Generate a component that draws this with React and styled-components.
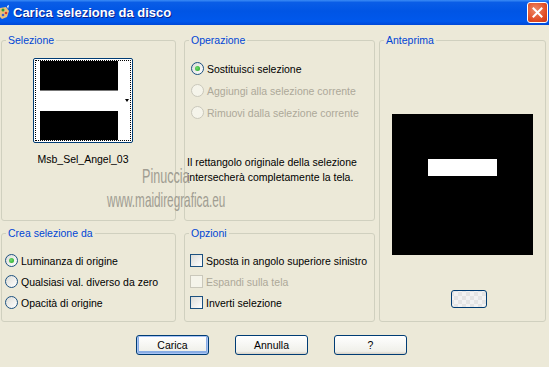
import React from 'react';
import styled, { createGlobalStyle } from 'styled-components';

const GlobalStyles = createGlobalStyle`
  body {
    margin: 0;
    padding: 0;
    background: #ECE9D8;
    font-family: 'Liberation Sans', Arial, sans-serif;
  }
`;

const Window = styled.div`
  position: relative;
  width: 549px;
  height: 367px;
  background: #ECE9D8;
  overflow: hidden;
  font-size: 10.5px;
  color: #000;
`;

const TitleBar = styled.div`
  height: 25px;
  display: flex;
  align-items: center;
  background: linear-gradient(#3B8CF6 0%, #0A5DE6 10%, #0055E5 45%, #0058EC 85%, #0048D8 100%);
  color: #fff;
  font-size: 13px;
  font-weight: bold;
  text-shadow: 1px 1px 0 #0A1E8A;
`;

const TitleIcon = styled.svg`
  width: 10px;
  height: 16px;
  margin-right: 3px;
  flex: none;
`;

const CloseButton = styled.div`
  margin-left: auto;
  margin-right: 1px;
  width: 19px;
  height: 19px;
  border: 1px solid #fff;
  border-radius: 3px;
  background: radial-gradient(circle at 40% 35%, #EE8A68, #E04A22 65%, #C4361A);
  display: flex;
  align-items: center;
  justify-content: center;
`;

const Body = styled.div`
  display: grid;
  grid-template-columns: 175px 199px 171px;
  grid-template-rows: 181px 89px;
  row-gap: 12px;
  padding: 15px 0 0 1px;
`;

const Group = styled.div`
  position: relative;
  border: 1px solid #D0D0BF;
  border-radius: 3px;
  margin-left: ${p => p.$ml || 0}px;
  grid-column: ${p => p.$col};
  grid-row: ${p => p.$row};
  box-sizing: border-box;
`;

const Legend = styled.span`
  position: absolute;
  top: -7px;
  left: 4px;
  padding: 0 2px;
  background: #ECE9D8;
  color: #0046D5;
  font-size: 10.5px;
  line-height: 12px;
`;

const SelectionBody = styled.div`
  display: flex;
  flex-direction: column;
  align-items: flex-start;
  padding: 17px 0 0 31px;
`;

const Thumb = styled.div`
  position: relative;
  width: 100px;
  height: 85px;
  box-sizing: border-box;
  border: 1px solid #003C74;
  border-radius: 2px;
  background: #fff;
  padding: 2px 7px 2px 6px;
  display: flex;
  flex-direction: column;
  &::after {
    content: '';
    position: absolute;
    inset: 1px;
    border: 1px dotted #000;
  }
`;

const Band = styled.div`
  background: ${p => p.$light ? '#fff' : '#000'};
  height: ${p => p.$h}px;
  width: 78px;
  border-bottom: ${p => p.$line ? '1px solid #777' : 'none'};
`;

const Arrow = styled.div`
  position: absolute;
  right: 3px;
  top: 40px;
  width: 0;
  height: 0;
  border-left: 2.5px solid transparent;
  border-right: 2.5px solid transparent;
  border-top: 3px solid #000;
`;

const FileName = styled.div`
  width: 100px;
  text-align: center;
  margin-top: 10px;
  font-size: 10.5px;
`;

const OptionList = styled.div`
  display: flex;
  flex-direction: column;
  gap: ${p => p.$gap || 8}px;
  padding: ${p => p.$pad};
`;

const Option = styled.div`
  display: flex;
  align-items: center;
  gap: 3px;
  height: 13px;
  color: ${p => p.$disabled ? '#ACA899' : '#000'};
  white-space: nowrap;
`;

const Radio = styled.span`
  width: 11px;
  height: 11px;
  border-radius: 50%;
  border: 1px solid ${p => p.$disabled ? '#CAC8BB' : '#1C5180'};
  background: ${p => p.$disabled ? '#F5F4EA' : 'linear-gradient(135deg, #DCDCD7, #FFFFFF)'};
  display: flex;
  align-items: center;
  justify-content: center;
  flex: none;
  &::after {
    content: '';
    display: ${p => p.$checked ? 'block' : 'none'};
    width: 5px;
    height: 5px;
    border-radius: 50%;
    background: radial-gradient(circle at 40% 40%, #6EDC6E, #21A121);
  }
`;

const Check = styled.span`
  width: 11px;
  height: 11px;
  border: 1px solid ${p => p.$disabled ? '#CAC8BB' : '#1C5180'};
  background: ${p => p.$disabled ? '#F5F4EA' : 'linear-gradient(135deg, #DCDCD7, #FFFFFF)'};
  flex: none;
`;

const Note = styled.div`
  padding: 36px 0 0 2px;
  line-height: 14.5px;
  white-space: nowrap;
`;

const PreviewBody = styled.div`
  display: flex;
  flex-direction: column;
  align-items: center;
  padding-top: 73px;
`;

const Preview = styled.div`
  width: 141px;
  height: 141px;
  background: #000;
  display: flex;
  align-items: flex-start;
  padding: 45px 0 0 36px;
  box-sizing: border-box;
`;

const PreviewHole = styled.div`
  width: 69px;
  height: 17px;
  background: #fff;
`;

const SmallButton = styled.div`
  margin: 35px 0 0 12px;
  width: 36px;
  height: 18px;
  box-sizing: border-box;
  border: 1px solid #003C74;
  border-radius: 3px;
  background:
    repeating-conic-gradient(#F2F2F2 0 25%, #E4E4E4 0 50%) 10px 5px / 8px 8px,
    #F6F6F3;
  background-clip: padding-box;
`;

const ButtonRow = styled.div`
  display: flex;
  gap: 26px;
  padding: 13px 0 0 136px;
`;

const Button = styled.div`
  width: 73px;
  height: 20px;
  box-sizing: border-box;
  border: 1px solid #003C74;
  border-radius: 3px;
  background: linear-gradient(#FFFFFF, #F0F0EA 85%, #D6D0C5);
  display: flex;
  align-items: center;
  justify-content: center;
  font-size: 10.5px;
  box-shadow: ${p => p.$default ? 'inset 0 0 0 1px #A9C4F5, inset 0 -1px 0 2px #89ADE4' : 'none'};
`;

const Watermark = styled.div`
  position: absolute;
  left: ${p => p.$x}px;
  top: ${p => p.$y}px;
  color: #A09D92;
  font-family: 'Liberation Sans Narrow', 'Liberation Sans', sans-serif;
  font-size: ${p => p.$size}px;
  transform: scaleX(${p => p.$sx});
  transform-origin: left top;
  white-space: nowrap;
  pointer-events: none;
`;

export default function App() {
  return (
    <Window>
      <GlobalStyles />
      <TitleBar>
        <TitleIcon viewBox="0 0 10 16">
          <path d="M0 3 L6 2 L9 6 L7 12 L2 14 L0 12 Z" fill="#E8C07A" />
          <circle cx="3" cy="5" r="1.5" fill="#2E9A3A" />
          <circle cx="6" cy="8" r="1.3" fill="#D83A2A" />
          <circle cx="3" cy="10" r="1.3" fill="#3A5FD0" />
          <path d="M7 1 L9 0 L8 4 Z" fill="#fff" />
        </TitleIcon>
        Carica selezione da disco
        <CloseButton>
          <svg width="11" height="11" viewBox="0 0 11 11">
            <path d="M1.5 1.5 L9.5 9.5 M9.5 1.5 L1.5 9.5" stroke="#fff" strokeWidth="2" strokeLinecap="square" />
          </svg>
        </CloseButton>
      </TitleBar>

      <Body>
        <Group $col="1" $row="1">
          <Legend>Selezione</Legend>
          <SelectionBody>
            <Thumb>
              <Band $h={29} $line />
              <Band $h={20} $light />
              <Band $h={29} />
              <Arrow />
            </Thumb>
            <FileName>Msb_Sel_Angel_03</FileName>
          </SelectionBody>
        </Group>

        <Group $col="2" $row="1" $ml={8}>
          <Legend>Operazione</Legend>
          <OptionList $pad="21px 0 0 6px" $gap={9}>
            <Option><Radio $checked />Sostituisci selezione</Option>
            <Option $disabled><Radio $disabled />Aggiungi alla selezione corrente</Option>
            <Option $disabled><Radio $disabled />Rimuovi dalla selezione corrente</Option>
          </OptionList>
          <Note>
            Il rettangolo originale della selezione<br />
            intersecherà completamente la tela.
          </Note>
        </Group>

        <Group $col="3" $row="1 / 3" $ml={4}>
          <Legend>Anteprima</Legend>
          <PreviewBody>
            <Preview>
              <PreviewHole />
            </Preview>
            <SmallButton />
          </PreviewBody>
        </Group>

        <Group $col="1" $row="2">
          <Legend>Crea selezione da</Legend>
          <OptionList $pad="20px 0 0 3px" $gap={8}>
            <Option><Radio $checked />Luminanza di origine</Option>
            <Option><Radio />Qualsiasi val. diverso da zero</Option>
            <Option><Radio />Opacità di origine</Option>
          </OptionList>
        </Group>

        <Group $col="2" $row="2" $ml={8}>
          <Legend>Opzioni</Legend>
          <OptionList $pad="20px 0 0 5px" $gap={8}>
            <Option><Check />Sposta in angolo superiore sinistro</Option>
            <Option $disabled><Check $disabled />Espandi sulla tela</Option>
            <Option><Check />Inverti selezione</Option>
          </OptionList>
        </Group>
      </Body>

      <ButtonRow>
        <Button $default>Carica</Button>
        <Button>Annulla</Button>
        <Button>?</Button>
      </ButtonRow>

      <Watermark $x={142} $y={164} $size={21} $sx={0.6}>Pinuccia</Watermark>
      <Watermark $x={107} $y={188} $size={21} $sx={0.56}>www.maidiregrafica.eu</Watermark>
    </Window>
  );
}
